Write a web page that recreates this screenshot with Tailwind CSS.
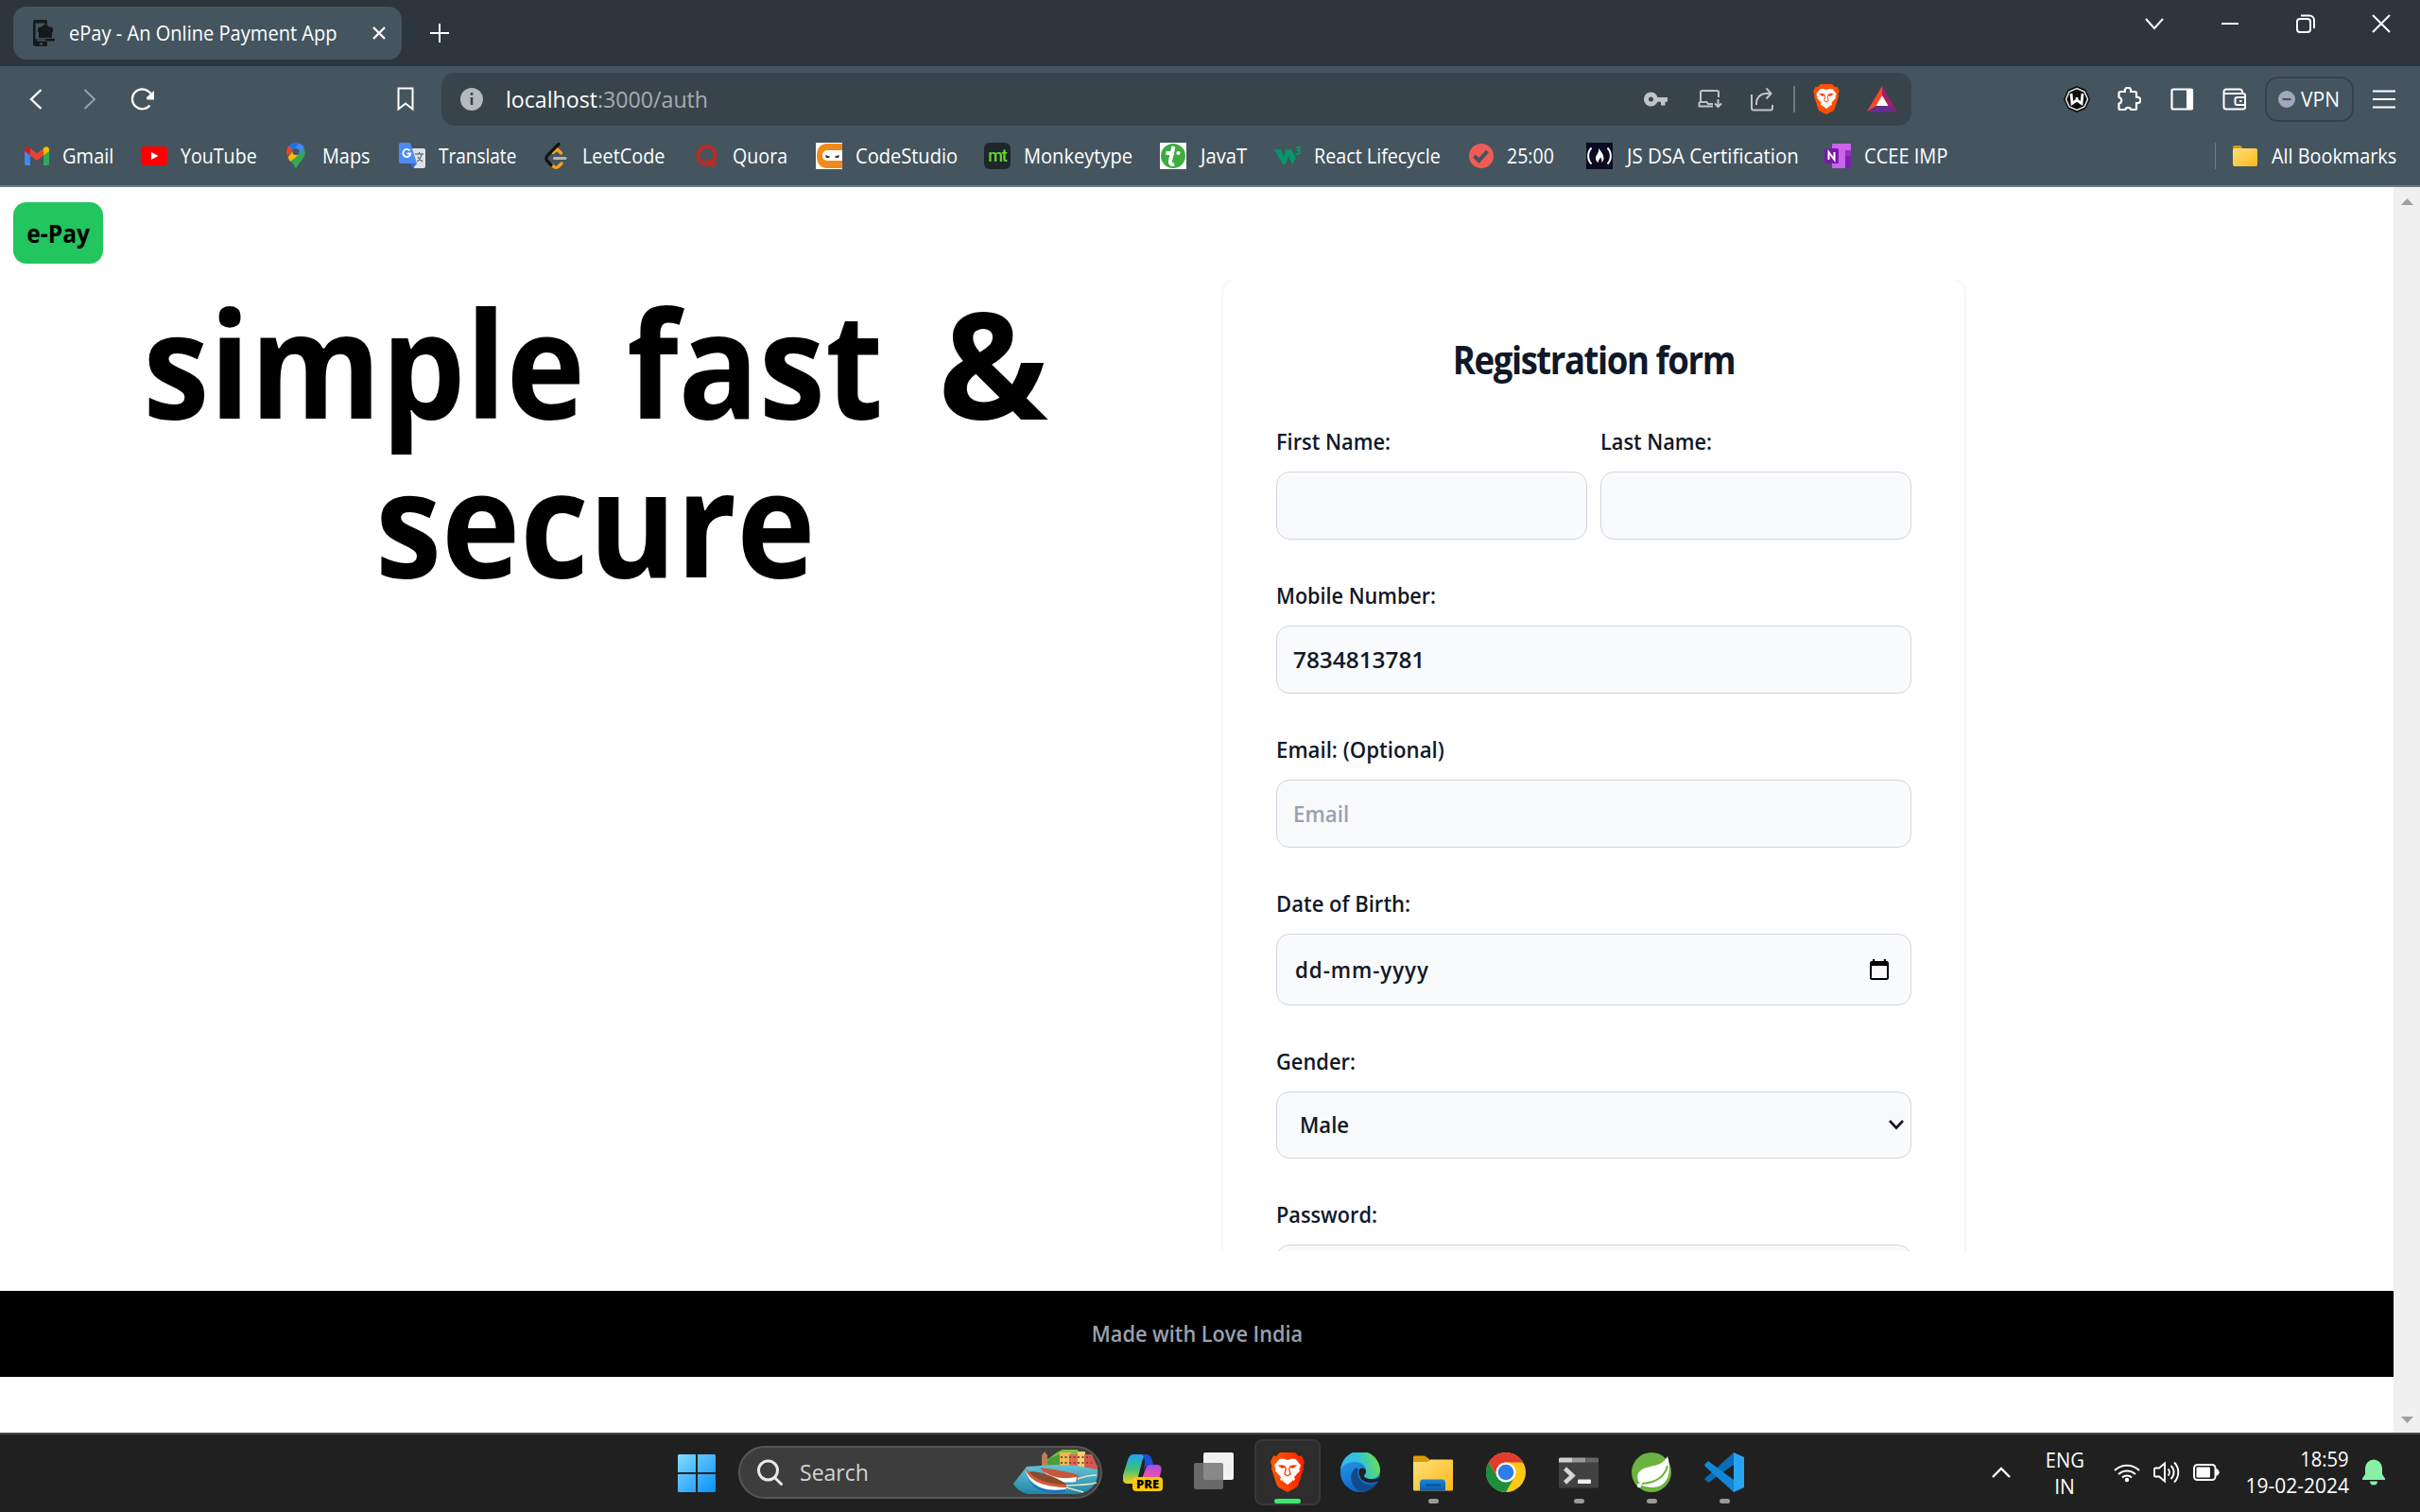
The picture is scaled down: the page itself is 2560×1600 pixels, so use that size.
<!DOCTYPE html>
<html lang="en">
<head>
<meta charset="utf-8">
<title>ePay - An Online Payment App</title>
<script src="https://cdn.jsdelivr.net/npm/@tailwindcss/browser@4"></script>
</head>
<body class="w-[2560px] h-[1600px] overflow-hidden bg-white font-['Open_Sans','Noto_Sans',sans-serif] text-[21px] leading-none text-white whitespace-nowrap">
<svg width="0" height="0" class="absolute">
  <defs>
    <linearGradient id="lg-brave" x1="0" x2="1"><stop offset="0" stop-color="#ff5a00"/><stop offset="1" stop-color="#ff2000"/></linearGradient>
    <linearGradient id="lg-win" x1="0" y1="0" x2="1" y2="1"><stop offset="0" stop-color="#7fdcff"/><stop offset="1" stop-color="#0a8ffb"/></linearGradient>
    <linearGradient id="lg-folder" x1="0" y1="0" x2="1" y2="1"><stop offset="0" stop-color="#ffe07a"/><stop offset="1" stop-color="#fbb91b"/></linearGradient>
    <linearGradient id="lg-tray" x1="0" y1="0" x2="0" y2="1"><stop offset="0" stop-color="#1a86d8"/><stop offset="1" stop-color="#0b5fae"/></linearGradient>
    <linearGradient id="lg-edge1" x1="0" y1=".6" x2="1" y2=".4"><stop offset="0" stop-color="#35b8f5"/><stop offset=".5" stop-color="#2fc3d8"/><stop offset="1" stop-color="#6be04a"/></linearGradient>
    <linearGradient id="lg-edge2" x1="0" y1="0" x2=".4" y2="1"><stop offset="0" stop-color="#2da0ec"/><stop offset="1" stop-color="#0a66c8"/></linearGradient>
    <linearGradient id="lg-cop1" x1="0" y1="0" x2="0" y2="1"><stop offset="0" stop-color="#19a5f5"/><stop offset=".5" stop-color="#3fbf7a"/><stop offset="1" stop-color="#f8d21c"/></linearGradient>
    <linearGradient id="lg-cop2" x1="0" y1="0" x2="0" y2="1"><stop offset="0" stop-color="#a54bf0"/><stop offset=".6" stop-color="#f0559a"/><stop offset="1" stop-color="#ff8a5c"/></linearGradient>
    <linearGradient id="lg-sea" x1="0" y1="0" x2="0" y2="1"><stop offset="0" stop-color="#66c3d6"/><stop offset="1" stop-color="#1f86a8"/></linearGradient>
    <symbol id="lion" viewBox="0 0 36 42">
      <path d="M10 0h16l4 4 3-.5L36 10l-1.500 4L35 17l-5.500 17-2 3L18 42l-9.500-5-2-3L1 17l.5-3L0 10l3-6.500L6 4z"/>
      <path fill="#fff" d="M9.500 7l4-.5L18 8l4.500-1.500 4 .5 5.500 6.500-1.500 4 .5 2-6 6.500 1 2.500-1.500 1.500-6.500-4-6.500 4-1.500-1.500 1-2.500L5 19.500l.5-2-1.500-4z"/>
      <path fill="#f83a05" d="M7.500 13.500l5-.3 3.500 1.300-.5 1.500-3.500.7zM28.500 13.500l-5-.3-3.500 1.300.5 1.500 3.500.7z"/>
      <path fill="none" stroke="#f83a05" stroke-width="1.300" d="M15.500 15.500l.8 2-1.300 5.500 3 1.800 3-1.800-1.300-5.500.8-2"/>
      <path fill="#fff" d="M13 29l5-3.300 5 3.300v1.200l-5 4-5-4z"/>
    </symbol>
  </defs>
</svg>

<!-- Tab strip -->
<header class="flex h-[70px] w-full items-start bg-[#2c363c]">
  <div class="ml-[14px] mt-[7px] flex h-[56px] w-[411px] items-center rounded-[14px] bg-[#44555f] pl-[20px]">
    <svg class="h-[28px] w-[24px]" viewBox="0 0 24 28"><path fill="#15191c" fill-rule="evenodd" d="M2 0h13l1 1v4h-2.500V3.500h-10v17H14V23H2.500zM6 13V9l2-1.500h2L14 4l4 3.500h2L22 9v4zM7 13h14v6H7zM5 20h19v2.500H5zM2 23h14v4l-1 1H3l-1-1zM8 24.500v2h3v-2z"/><path stroke="#15191c" stroke-width="2" d="M2 1v26"/></svg>
    <span class="ml-[15px] w-[291px] origin-left scale-x-[.956]">ePay - An Online Payment App</span>
    <svg class="ml-[29px] h-[16px] w-[16px]" viewBox="0 0 16 16" fill="none" stroke="#fff" stroke-width="2.400"><path d="M2 2l12 12M14 2L2 14"/></svg>
  </div>
  <svg class="ml-[30px] mt-[25px] h-[20px] w-[20px]" viewBox="0 0 20 20" fill="none" stroke="#fff" stroke-width="2"><path d="M10 0v20M0 10h20"/></svg>
  <div class="ml-auto mr-[31px] mt-[15px] flex items-center gap-[60px]">
    <svg class="h-[20px] w-[20px]" viewBox="0 0 20 20" fill="none" stroke="#fff" stroke-width="2"><path d="M1 5l9 10 9-10"/></svg>
    <svg class="h-[20px] w-[20px]" viewBox="0 0 20 20" fill="none" stroke="#fff" stroke-width="2"><path d="M1 10h18"/></svg>
    <svg class="h-[20px] w-[20px]" viewBox="0 0 20 20" fill="none" stroke="#fff" stroke-width="2"><rect x="1" y="5" width="14" height="14" rx="3"/><path d="M5 1.500h9a5 5 0 0 1 5 5V15"/></svg>
    <svg class="h-[20px] w-[20px]" viewBox="0 0 20 20" fill="none" stroke="#fff" stroke-width="2"><path d="M1 1l18 18M19 1L1 19"/></svg>
  </div>
</header>

<!-- Toolbar -->
<div class="flex h-[70px] w-full items-center bg-[#44555f]">
  <svg class="ml-[31px] h-[24px] w-[14px]" viewBox="0 0 14 24" fill="none" stroke="#fff" stroke-width="2.400"><path d="M12.500 2L2 12l10.500 10"/></svg>
  <svg class="ml-[43px] h-[24px] w-[14px]" viewBox="0 0 14 24" fill="none" stroke="#97a1a8" stroke-width="2"><path d="M1.500 2L12 12 1.500 22"/></svg>
  <svg class="ml-[36px] h-[26px] w-[26px]" viewBox="0 0 26 26" fill="none" stroke="#fff" stroke-width="2.200"><path d="M20.500 19.500A10.500 10.500 0 1 1 20 5.500L22.500 8"/><path fill="#fff" stroke="none" d="M25 4v9.500h-7a3 3 0 0 1-1-2.500z"/></svg>
  <svg class="ml-[256px] h-[26px] w-[18px]" viewBox="0 0 18 26" fill="none" stroke="#fff" stroke-width="2"><path d="M1.500 1.500h15v22L9 17.500l-7.500 6z"/></svg>
  <div class="ml-[29px] flex h-[56px] w-[1555px] items-center rounded-[14px] bg-[#38444b] pl-[20px] text-[24.5px]">
    <svg class="h-[24px] w-[24px]" viewBox="0 0 24 24"><circle cx="12" cy="12" r="12" fill="#b5babd"/><path fill="#38444b" d="M10.700 5h2.600v2.700h-2.600zM10.700 10h2.600v8h-2.600z"/></svg>
    <div class="ml-[24px] flex origin-left scale-x-[.945]"><span>localhost</span><span class="text-[#a6adb2]">:3000/auth</span></div>
    <div class="ml-auto mr-[15px] flex items-center">
      <svg class="h-[16px] w-[26px]" viewBox="0 0 26 16"><path fill="#c0c4c7" fill-rule="evenodd" d="M7.500 0.500a7.500 7.500 0 1 0 6.900 10.300H18V14.500h4.500v-3.700H25V6H14.400A7.500 7.500 0 0 0 7.500 .5zm0 5a2.500 2.500 0 1 1 0 5 2.500 2.500 0 0 1 0-5z"/></svg>
      <svg class="ml-[31px] h-[20px] w-[26px]" viewBox="0 0 26 20" fill="none" stroke="#c0c4c7" stroke-width="2"><path d="M22 8V2.500A1.500 1.500 0 0 0 20.500 1H4.500A1.500 1.500 0 0 0 3 2.500V13M1.500 13h8l1.500 2h5M1.500 13v4.500H16M21.500 10v8M18 14.500l3.500 3.500 3.500-3.500"/></svg>
      <svg class="ml-[30px] h-[26px] w-[26px]" viewBox="0 0 26 26" fill="none" stroke="#c0c4c7" stroke-width="2"><path d="M1 8v14.500a2 2 0 0 0 2 2h18a2 2 0 0 0 2-2V19M6 19v-2A10 10 0 0 1 15 7h7M16.500 1.500l5 5.500-5 5.500"/></svg>
      <div class="ml-[19px] h-[28px] w-[2px] bg-[#6d7a82]"></div>
      <svg class="ml-[19px] h-[32px] w-[28px]" fill="#ff5000"><use href="#lion" width="28" height="32"/></svg>
      <svg class="ml-[29px] h-[28px] w-[32px]" viewBox="0 0 32 28"><path fill="#ff4724" d="M16 0L0 27l10-6 6-11z"/><path fill="#9e1f63" d="M16 0l16 27-10-6-6-11z"/><path fill="#662d91" d="M0 27.500h32L22 21H10z"/><path fill="#fff" d="M16 10l6.500 11h-13z"/></svg>
    </div>
  </div>
  <div class="ml-auto mr-[26px] flex items-center">
    <svg class="h-[28px] w-[28px]" viewBox="0 0 28 28"><path fill="#0a0a0a" d="M14 0l9.500 4L28 14l-4.500 10L14 28l-9.500-4L0 14 4.500 4z"/><path fill="#0a0a0a" stroke="#dfe3e5" stroke-width="1.600" d="M14 2.500l8 3.500 3.500 8-3.500 8-8 3.500L6 22l-3.500-8L6 6z"/><path fill="none" stroke="#fff" stroke-width="2.800" d="M8 8l1 10.500 5-3.500 5 3.500L20 8M14 12v4"/></svg>
    <svg class="ml-[28px] h-[26px] w-[26px]" viewBox="0 0 26 26" fill="none" stroke="#fff" stroke-width="2.200" stroke-linejoin="round"><path d="M4 5h5a3.200 3.200 0 1 1 6 0h4.500a1.500 1.500 0 0 1 1.500 1.500V11a3.200 3.200 0 1 1 0 6v5.500a1.500 1.500 0 0 1-1.500 1.500H15.500a3.500 3.500 0 0 0-6.500 0H4a1.500 1.500 0 0 1-1.500-1.500V17.500a3.300 3.300 0 0 0 0-6.500V6.500A1.500 1.500 0 0 1 4 5z"/></svg>
    <svg class="ml-[31px] h-[24px] w-[26px]" viewBox="0 0 26 24"><rect x="1.500" y="1.500" width="21.500" height="21" rx="1.500" fill="none" stroke="#fff" stroke-width="2.200"/><path fill="#fff" d="M17 1h7v22h-7z"/></svg>
    <svg class="ml-[29px] h-[24px] w-[26px]" viewBox="0 0 26 24" fill="none" stroke="#fff" stroke-width="2"><path d="M21 6V4a2.500 2.500 0 0 0-2.500-2.500H4A2.500 2.500 0 0 0 1.500 4v16A2.500 2.500 0 0 0 4 22.500h18a2 2 0 0 0 2-2V8a2 2 0 0 0-2-2H2M24 10h-8.500a2 2 0 0 0-2 2v4a2 2 0 0 0 2 2H24M18 14h2.500"/></svg>
    <div class="ml-[19px] flex h-[48px] w-[94px] items-center rounded-[14px] border-2 border-[#36424a] pl-[12px]">
      <svg class="h-[18px] w-[18px]" viewBox="0 0 18 18"><circle cx="9" cy="9" r="9" fill="#a1a7bd"/><path d="M4.500 9h9" stroke="#44555f" stroke-width="2.200"/></svg>
      <span class="ml-[6px]">VPN</span>
    </div>
    <svg class="ml-[20px] h-[20px] w-[24px]" viewBox="0 0 24 20" stroke="#fff" stroke-width="2"><path d="M0 1.500h24M0 10h24M0 18.500h24"/></svg>
  </div>
</div>

<!-- Bookmarks bar -->
<nav class="flex h-[58px] w-full items-start border-b-2 border-[#6f7c85] bg-[#44555f] pl-[25px] pt-[10px] [&_svg]:shrink-0">
  <a class="flex h-[30px] w-[124px] items-center gap-[13px]"><svg class="h-[28px] w-[28px]" viewBox="0 0 28 28"><path fill="#4285f4" d="M1 8v14a2 2 0 0 0 2 2h4V12z"/><path fill="#34a853" d="M27 8v14a2 2 0 0 1-2 2h-4V12z"/><path fill="#ea4335" d="M7 6l7 5.500L21 6v7.500L14 19l-7-5.500z"/><path fill="#c5221f" d="M1 7a3 3 0 0 1 5-2l1 1v7.500L1 9z"/><path fill="#fbbc04" d="M27 7a3 3 0 0 0-5-2l-1 1v7.500L27 9z"/></svg><span class="origin-left scale-x-[.955]">Gmail</span></a>
  <a class="flex h-[30px] w-[150px] items-center gap-[14px]"><svg class="h-[28px] w-[28px]" viewBox="0 0 28 28"><rect y="4" width="28" height="20" rx="4" fill="#f00"/><path fill="#fff" d="M11 10l7.500 4-7.500 4z"/></svg><span class="origin-left scale-x-[.934]">YouTube</span></a>
  <a class="flex h-[30px] w-[123px] items-center gap-[14px]"><svg class="h-[28px] w-[28px]" viewBox="0 0 28 28"><path fill="#34a853" d="M14 28c1.500-6 10-11 10-18L20 4 8 19c3 3 5 6 6 9z"/><path fill="#fbbc04" d="M8 19l9-11-3 0-8 8z"/><path fill="#fbbc04" d="M5.500 15.500L12 7l5 6-9 7z"/><path fill="#ea4335" d="M6.500 3.500A10 10 0 0 0 5 14l7-7z"/><path fill="#1a73e8" d="M6.500 3.500A9.800 9.800 0 0 1 17 .5L11 8z"/><path fill="#4285f4" d="M17 .5a10 10 0 0 1 6 5.500l-7 8-5-6z"/><circle cx="14" cy="9.500" r="3.600" fill="#44555f"/></svg><span class="origin-left scale-x-[.945]">Maps</span></a>
  <a class="flex h-[30px] w-[153px] items-center gap-[14px]"><svg class="h-[28px] w-[28px]" viewBox="0 0 28 28"><path fill="#dfe1e3" d="M12 6h14a2 2 0 0 1 2 2v17a2 2 0 0 1-2 2H16z"/><path fill="#3a68d0" d="M12 22h7l-4 5z"/><path fill="#4b8bf5" d="M2 0h10l7 22H2a2 2 0 0 1-2-2V2a2 2 0 0 1 2-2z"/><path fill="none" stroke="#fff" stroke-width="1.800" d="M11.500 8.500a4 4 0 1 0 .8 3H8.500"/><path fill="none" stroke="#6a7580" stroke-width="1.400" d="M17 12h9M21.500 10v2m2.500 0c-.5 4-3 6.500-5 8m1-5c1 2 3 4 5 5"/></svg><span class="origin-left scale-x-[.905]">Translate</span></a>
  <a class="flex h-[30px] w-[159px] items-center gap-[13px]"><svg class="h-[28px] w-[28px]" viewBox="0 0 28 28" fill="none" stroke-width="3.200" stroke-linecap="round"><path stroke="#ffa116" d="M10 10.500L14.500 7l4 4M8 23l3 2.500a4 4 0 0 0 4.500 0L19 22"/><path stroke="#111" d="M16 1.500L4 13.500a4.500 4.500 0 0 0 0 6L8 23.500"/><path stroke="#b3b3b3" d="M11.500 16.500H23"/></svg><span class="origin-left scale-x-[.945]">LeetCode</span></a>
  <a class="flex h-[30px] w-[129px] items-center gap-[13px]"><svg class="h-[28px] w-[28px]" viewBox="0 0 28 28"><ellipse cx="13.500" cy="13.500" rx="9" ry="9.500" fill="none" stroke="#b92b27" stroke-width="4"/><path fill="none" stroke="#b92b27" stroke-width="3.200" d="M12 18c4-1 5 6 8 6 2 0 3-1 3-3"/></svg><span class="origin-left scale-x-[.935]">Quora</span></a>
  <a class="flex h-[30px] w-[178px] items-center gap-[14px]"><svg class="h-[28px] w-[28px]" viewBox="0 0 28 28"><path fill="#fff" d="M0 0h28v28H0z"/><path fill="#f08a1c" d="M28 1v26H12C5 27 1 22 1 14S5 1 12 1z"/><path fill="#fff" d="M28 8v11H13c-4 0-6-2-6-5.500S9 8 13 8z"/><path fill="#333" d="M10 13l5 1.500-1 1.500h-3zM25 13l-5 1.500 1 1.500h3z"/></svg><span class="origin-left scale-x-[.955]">CodeStudio</span></a>
  <a class="flex h-[30px] w-[186px] items-center gap-[14px]"><span class="flex h-[28px] w-[28px] shrink-0 items-center justify-center rounded-[6px] bg-[#1c262b] font-['Roboto',sans-serif] text-[18px] font-medium tracking-[-1px] text-[#65d62f]">mt</span><span class="origin-left scale-x-[.955]">Monkeytype</span></a>
  <a class="flex h-[30px] w-[121px] items-center gap-[15px]"><svg class="h-[28px] w-[28px]" viewBox="0 0 28 28"><path fill="#fff" d="M0 0h28v28H0z"/><circle cx="14" cy="14" r="13" fill="#3fab42"/><path fill="none" stroke="#fff" stroke-width="4" d="M14.500 4L11 19c-.5 3 1 5 4 3.500M6.500 11H15"/><circle cx="19.500" cy="11" r="2" fill="#fff"/></svg><span class="origin-left scale-x-[.965]">JavaT</span></a>
  <a class="flex h-[30px] w-[205px] items-center gap-[14px]"><svg class="h-[28px] w-[28px]" viewBox="0 0 28 28"><path fill="#059669" d="M0 7h7l3 8 2-8h6l2 4 3 5-4 7-4-9-3 9-3 0z"/><path fill="none" stroke="#059669" stroke-width="1.800" d="M23 5h4l-2 3c3 0 3 4 0 4-1 0-2-.5-2-1"/></svg><span class="origin-left scale-x-[.94]">React Lifecycle</span></a>
  <a class="flex h-[30px] w-[125px] items-center gap-[13px]"><svg class="h-[28px] w-[28px]" viewBox="0 0 28 28"><circle cx="14" cy="14" r="13" fill="#f05b56"/><path fill="none" stroke="#44555f" stroke-width="4" d="M6.500 14l5 5L20.500 9"/></svg><span class="origin-left scale-x-[.93]">25:00</span></a>
  <a class="flex h-[30px] w-[252px] items-center gap-[15px]"><svg class="h-[28px] w-[28px]" viewBox="0 0 28 28"><path fill="#0a0a23" d="M0 0h28v28H0z"/><path fill="none" stroke="#fff" stroke-width="2" d="M5.500 5.500C1 10 1 18 5.500 22.500M22.500 5.500C27 10 27 18 22.500 22.500"/><path fill="#fff" d="M13 6c3 3 5.500 7 5.500 10.500A5 5 0 0 1 16 21c1-3 0-4-1-5.500-.5 2-2.500 2.500-2 5.500a5 5 0 0 1-3-4.500C10 13 14 11 13 6z"/></svg><span class="origin-left scale-x-[.973]">JS DSA Certification</span></a>
  <a class="flex h-[30px] w-[200px] items-center gap-[14px]"><svg class="h-[28px] w-[28px]" viewBox="0 0 28 28"><path fill="#ca64ea" d="M8 2a1 1 0 0 1 1-1h18a1 1 0 0 1 1 1v24a1 1 0 0 1-1 1H9a1 1 0 0 1-1-1z"/><path fill="#9332bf" d="M22 8h6v6h-6z"/><path fill="#7b1fa8" d="M22 14h6v12a1 1 0 0 1-1 1h-5z"/><rect y="6" width="15" height="16" rx="1.500" fill="#7719aa"/><path fill="none" stroke="#fff" stroke-width="2" d="M4.500 18v-8l6 8v-8"/></svg><span class="origin-left scale-x-[.955]">CCEE IMP</span></a>
  <div class="ml-auto mr-[24px] flex h-[30px] items-center">
    <div class="h-[28px] w-px bg-[#6f7c85]"></div>
    <svg class="ml-[17px] h-[28px] w-[28px]" viewBox="0 0 28 28"><path fill="#d99a0b" d="M1 5a2 2 0 0 1 2-2h6l2.500 3H25v6H1z"/><rect x="1" y="6" width="26" height="19" rx="2" fill="url(#lg-folder)"/></svg>
    <span class="ml-[14px] w-[133px] origin-left scale-x-[.945]">All Bookmarks</span>
  </div>
</nav>

<!-- Page viewport -->
<div class="flex h-[1318px] w-full bg-white font-semibold text-gray-900">
  <div class="flex w-[2532px] flex-col">
    <div class="flex h-[98px] items-start pl-[14px] pt-[16px]">
      <div class="flex h-[65px] w-[95px] items-center justify-center rounded-[14px] bg-[#22c55e] text-[27px] font-bold text-black"><span class="scale-x-[.912]">e-Pay</span></div>
    </div>
    <main class="flex h-[1028px] overflow-hidden">
      <h1 class="flex w-[1266px] flex-col items-center pr-[6px] pt-[3px] text-[156px] leading-[168px] font-bold text-black"><span class="scale-x-[.905] [word-spacing:8px]">simple fast <span class="ml-[27px] inline-block origin-right scale-x-110">&amp;</span></span><span class="scale-x-[.903]">secure</span></h1>
      <form class="ml-[28px] flex h-[1300px] w-[784px] shrink-0 flex-col gap-[42px] rounded-[14px] bg-white p-[56px] text-[24px] shadow-[0_0_4px_rgba(0,0,0,0.1)]">
        <h2 class="h-[56px] scale-x-[.891] text-center text-[41px] leading-[56px] font-bold tracking-[-1.6px]">Registration form</h2>
        <div class="flex gap-[14px]">
          <label class="flex w-[329px] flex-col gap-[14px]"><span class="h-[35px] origin-left scale-x-[.908] leading-[33px]">First Name:</span><span class="h-[72px] rounded-[14px] border border-gray-300 bg-gray-50"></span></label>
          <label class="flex w-[329px] flex-col gap-[14px]"><span class="h-[35px] origin-left scale-x-[.905] leading-[33px]">Last Name:</span><span class="h-[72px] rounded-[14px] border border-gray-300 bg-gray-50"></span></label>
        </div>
        <label class="flex flex-col gap-[14px]"><span class="h-[35px] origin-left scale-x-[.9] leading-[33px]">Mobile Number:</span><span class="flex h-[72px] items-center rounded-[14px] border border-gray-300 bg-gray-50 pb-[1px] pl-[17px]"><span class="origin-left scale-x-[1.015]">7834813781</span></span></label>
        <label class="flex flex-col gap-[14px]"><span class="h-[35px] origin-left scale-x-[.925] leading-[33px]">Email: (Optional)</span><span class="flex h-[72px] items-center rounded-[14px] border border-gray-300 bg-gray-50 pb-[1px] pl-[17px] text-gray-400"><span class="origin-left scale-x-[.93]">Email</span></span></label>
        <label class="flex flex-col gap-[14px]"><span class="h-[35px] origin-left scale-x-[.918] leading-[33px]">Date of Birth:</span><span class="flex h-[76px] items-center justify-between rounded-[14px] border border-gray-300 bg-gray-50 pl-[19px] pr-[23px]"><span class="origin-left scale-x-[.93] tracking-[1px]">dd-mm-yyyy</span><svg class="mb-[1px] h-[22px] w-[20px]" viewBox="0 0 20 22"><path fill="#000" fill-rule="evenodd" d="M3 0h2.200v2h9.600V0H17v2h1.500L20 3.500v17L18.500 22h-17L0 20.500v-17L1.500 2H3zM2 7v13h16V7z"/></svg></span></label>
        <label class="flex flex-col gap-[14px]"><span class="h-[35px] origin-left scale-x-[.91] leading-[33px]">Gender:</span><span class="flex h-[71px] items-center justify-between rounded-[14px] border border-gray-300 bg-gray-50 pb-[1px] pl-[24px] pr-[7px]"><span class="origin-left scale-x-[.92]">Male</span><svg class="h-[12px] w-[16px]" viewBox="0 0 16 12" fill="none" stroke="#111827" stroke-width="2.600"><path d="M1 2l7 7.500L15 2"/></svg></span></label>
        <label class="flex flex-col gap-[14px]"><span class="h-[35px] origin-left scale-x-[.905] leading-[33px]">Password:</span><span class="h-[72px] rounded-[14px] border border-gray-300 bg-gray-50"></span></label>
      </form>
    </main>
    <footer class="mt-[42px] flex h-[91px] items-center justify-center bg-black pb-[2px] text-[24px] text-gray-400"><span class="scale-x-[.904]">Made with Love India</span></footer>
  </div>
  <div class="flex w-[28px] flex-col items-center justify-between bg-[#f0f0f0] pb-[10px] pt-[12px]">
    <svg class="h-[7px] w-[13px]" viewBox="0 0 13 7"><path fill="#a0a0a0" d="M0 7h13L6.500 0z"/></svg>
    <svg class="h-[7px] w-[13px]" viewBox="0 0 13 7"><path fill="#a0a0a0" d="M0 0h13L6.500 7z"/></svg>
  </div>
</div>

<!-- Taskbar -->
<div class="flex h-[84px] w-full items-start border-t-2 border-[#454545] bg-[#202020] pl-[716px] pt-[5px]">
  <div class="flex h-[70px] items-center">
    <svg class="mt-[1px] h-[42px] w-[42px]" viewBox="0 0 42 42" fill="url(#lg-win)"><path d="M2 1h18v19H1V2zM22 1h18l1 1v18H22zM1 22h19v19H2l-1-1zM22 22h19v18l-1 1H22z"/></svg>
    <div class="ml-[23px] flex h-[56px] w-[385px] items-center rounded-full border-2 border-[#565656] bg-[#3d3d3d] pl-[18px]">
      <svg class="h-[28px] w-[28px]" viewBox="0 0 28 28" fill="none" stroke="#e8e8e8" stroke-width="3" stroke-linecap="round"><circle cx="11.500" cy="12" r="10"/><path d="M19 20l6.500 6.500"/></svg>
      <span class="ml-[17px] origin-left scale-x-[.94] text-[24.5px] text-[#d4d4d4]">Search</span>
      <svg class="ml-auto mr-[2px] h-[48px] w-[90px]" viewBox="0 0 90 48">
        <path fill="#7cc142" d="M34 12L46 3l6-3h16l6 22H40z"/><path fill="#4f9c3a" d="M36 12c3-5 9-4 12-8l4 14H36z"/>
        <path fill="#b98055" d="M30 6l3-4 3 4v12h-6z"/><path fill="#efb94c" d="M49 3h12v16H49z"/><path fill="#e2665a" d="M59 5h10v15H59z"/><path fill="#f3d06a" d="M68 2h8v19h-8z"/><path fill="#d9574e" d="M75 5h8l6 13v6H75z"/>
        <path fill="none" stroke="#7a4a46" stroke-width="2" stroke-dasharray="2 2.500" d="M50 8h32M50 14h36"/>
        <path fill="url(#lg-sea)" d="M14 18l30-2 22 1 23 4c2 14-8 26-24 26H17C9 47 1 39 0 36z"/>
        <path fill="#c9573c" d="M28 19c16 2 28 4 41 8l-3 6c-14 2-30-3-38-14z"/><path fill="#fff" d="M33 24c12 7 22 7 34 5l-1 5c-14 2-26-1-33-10z"/>
        <path fill="#fff" d="M13 21c6 11 22 15 43 18l-1 5c-20 2-40-7-42-23z"/><path fill="#1b72c4" d="M17 34c10 8 22 10 38 8v3c-16 3-32-2-38-11z"/><path fill="#8a4a2c" d="M15 24c8-3 32 5 41 13-16 3-37-4-41-13z"/><path fill="#d65a3a" d="M13 20l4 4c7 9 24 13 39 13v3C36 40 15 34 13 20z"/>
        <path fill="none" stroke="#efe3b8" stroke-width="1.500" d="M56 38c12-1 20 0 32-3M68 31c8-3 14-4 20-4M56 40l18 5"/>
      </svg>
    </div>
    <div class="relative ml-[22px] h-[42px] w-[42px]">
      <svg class="h-[42px] w-[42px]" viewBox="0 0 42 42"><path fill="url(#lg-cop1)" d="M11 2h16c-4 0-6 4-7 8l-4 16c-1 5-3 7-7 7H5c-5 0-6-4-5-9L5 8c1-4 3-6 6-6z"/><path fill="#1c50dc" d="M19 2h5c4 0 6 3 7 7l1 4h-4c-4 0-5 3-6 6l1-9c0-4-1-7-4-8z"/><path fill="url(#lg-cop2)" d="M28 13h8c5 0 5 4 4 8l-4 14H12l4-4c3 0 4-2 5-6l3-8c1-3 2-4 4-4z"/></svg>
      <span class="absolute bottom-[1px] left-[10px] flex h-[15px] w-[32px] items-center justify-center rounded-[4px] bg-[#ffc60a] text-[13px] font-extrabold text-black">PRE</span>
    </div>
    <svg class="ml-[33px] mb-[2px] h-[42px] w-[42px]" viewBox="0 0 42 42"><rect x="10" y="1" width="32" height="29" rx="2" fill="#f1f1f1"/><rect y="12" width="31" height="28" rx="2" fill="#757575" fill-opacity=".85"/></svg>
    <div class="relative ml-[22px] flex h-[70px] w-[70px] items-center justify-center rounded-[8px] border-2 border-[#383838] bg-[#2d2d2d]">
      <svg class="h-[42px] w-[36px]" fill="url(#lg-brave)"><use href="#lion" width="36" height="42"/></svg>
      <div class="absolute bottom-[0px] left-[19px] h-[5px] w-[28px] rounded-full bg-[#3ee86b]"></div>
    </div>
    <svg class="ml-[21px] h-[42px] w-[42px]" viewBox="0 0 42 42"><circle cx="21" cy="21" r="21" fill="url(#lg-edge2)"/><path fill="url(#lg-edge1)" d="M0 20A21 21 0 0 1 42 19c0 6-5 9-10 9-4 0-7-1.500-7-3s2-2 2-6c0-5-5-9-12-9C7 10 1 14 0 20z"/><path fill="#114a8b" d="M17 16c-9 5-7 19 3 25 8 1 15-2 19-9-4 3-9 3-13 1-6-3-9-9-7-15z"/><path fill="#202020" d="M20 18c-2 7 3 14 12 14 4 0 6-1 8-2l1.500-4C39 28 36 28.500 32 28c-4 0-7-1.500-7-3s2-2 2-5-4-5-7-2z"/></svg>
    <div class="relative ml-[35px] h-[42px] w-[42px]"><svg class="h-[42px] w-[42px]" viewBox="0 0 42 42"><path fill="#dd9b09" d="M0 5a1.500 1.500 0 0 1 1.500-1.500H12L17 7v5H0z"/><path fill="url(#lg-folder)" d="M0 10h15l3-2.500h23a1 1 0 0 1 1 1V39a1.500 1.500 0 0 1-1.500 1.500h-39A1.500 1.500 0 0 1 0 39z"/><path fill="url(#lg-tray)" d="M7 40.500V32a3.500 3.500 0 0 1 3.500-3.500h20A3.500 3.500 0 0 1 34 32v8.500z"/><path stroke="#0a4f94" stroke-width="2" d="M13 34.500h16"/></svg><div class="absolute -bottom-[12px] left-[16px] h-[5px] w-[11px] rounded-full bg-[#9a9a9a]"></div></div>
    <svg class="ml-[35px] h-[42px] w-[42px]" viewBox="0 0 42 42"><circle cx="21" cy="21" r="21" fill="#ffc815"/><path fill="#e33b2e" d="M21 0a21 21 0 0 1 18.200 10.500H21a10.500 10.500 0 0 0-9 15.500L2.800 10.500A21 21 0 0 1 21 0z"/><path fill="#1e8e3e" d="M2.800 10.500L12 26.250a10.500 10.500 0 0 0 18 0L21 42A21 21 0 0 1 2.800 10.500z"/><circle cx="21" cy="21" r="10.500" fill="#fff"/><circle cx="21" cy="21" r="8.300" fill="#2b7de9"/></svg>
    <div class="relative ml-[35px] h-[42px] w-[42px]"><svg class="h-[42px] w-[42px]" viewBox="0 0 42 42"><path fill="#414141" d="M0 6h42v30a1.500 1.500 0 0 1-1.500 1.500h-39A1.500 1.500 0 0 1 0 36z"/><path fill="#cfcfcf" d="M0 10.500V7a1.500 1.500 0 0 1 1.500-1.500H14v5z"/><path fill="#999" d="M14 5.500h14v5H14z"/><path fill="#666" d="M28 5.500h12.500A1.500 1.500 0 0 1 42 7v3.500H28z"/><path fill="none" stroke="#d6d6d6" stroke-width="4.500" d="M6.500 17l8 7.500-8 7.500"/><rect x="20" y="28.500" width="14" height="4.500" rx="1" fill="#eee"/></svg><div class="absolute -bottom-[12px] left-[16px] h-[5px] w-[11px] rounded-full bg-[#9a9a9a]"></div></div>
    <div class="relative ml-[35px] h-[42px] w-[42px]"><svg class="h-[42px] w-[42px]" viewBox="0 0 42 42"><circle cx="21" cy="21" r="21" fill="#6db33f"/><path fill="#fff" d="M38 4c4 12 2 26-7 31-6 3-14 2-20 0C5 30 4 22 11 18c8-5 21-2 27-14z"/><path fill="none" stroke="#6db33f" stroke-width="2" d="M38 14c-3 12-13 18-27 19"/><circle cx="8" cy="35" r="2.200" fill="#fff"/></svg><div class="absolute -bottom-[12px] left-[16px] h-[5px] w-[11px] rounded-full bg-[#9a9a9a]"></div></div>
    <div class="relative ml-[35px] h-[42px] w-[42px]"><svg class="h-[42px] w-[42px]" viewBox="0 0 42 42"><path fill="#0b6cb5" d="M0 28l4 4L31 13V0z"/><path fill="#1287d6" d="M0 13l4-4 27 20v13L1 15z"/><path fill="#26a5f2" d="M31 0l11 5v32l-11 5z"/></svg><div class="absolute -bottom-[12px] left-[16px] h-[5px] w-[11px] rounded-full bg-[#9a9a9a]"></div></div>
  </div>
  <div class="ml-auto mr-[37px] flex h-[70px] items-center">
    <svg class="h-[12px] w-[20px]" viewBox="0 0 20 12" fill="none" stroke="#fff" stroke-width="2.400"><path d="M1 11l9-9 9 9"/></svg>
    <div class="ml-[37px] flex w-[40px] flex-col items-center pt-[1px] leading-[28px]"><span class="scale-x-[.96]">ENG</span><span>IN</span></div>
    <svg class="ml-[32px] h-[22px] w-[28px]" viewBox="0 0 28 22" fill="none" stroke="#fff" stroke-width="2"><path d="M1 9a18.500 18.500 0 0 1 26 0M5 13a13 13 0 0 1 18 0M9 16.500a7.500 7.500 0 0 1 10 0"/><circle cx="14" cy="19" r="2.200" fill="#fff" stroke="none"/></svg>
    <svg class="ml-[14px] h-[24px] w-[28px]" viewBox="0 0 28 24" fill="none" stroke="#fff" stroke-width="1.900"><path d="M1 8.500a1 1 0 0 1 1-1h4l6-5v19l-6-5H2a1 1 0 0 1-1-1zM15.500 8.500a5 5 0 0 1 0 7M18.500 5a9.500 9.500 0 0 1 0 14M22 1.500a15 15 0 0 1 0 21"/></svg>
    <svg class="ml-[14px] h-[18px] w-[28px]" viewBox="0 0 28 18"><rect x="1" y="1" width="22.500" height="16" rx="3.500" fill="none" stroke="#fff" stroke-width="2"/><rect x="3.500" y="3.500" width="14.500" height="11" rx="1" fill="#fff"/><path fill="#fff" d="M24 5.500h2L28 9l-2 3.500h-2z"/></svg>
    <div class="ml-[27px] flex w-[110px] flex-col items-end leading-[28px]"><span class="origin-right scale-x-[.96]">18:59</span><span>19-02-2024</span></div>
    <svg class="ml-[14px] h-[28px] w-[24px]" viewBox="0 0 24 28"><path fill="#87f0a5" d="M12 .5a9 9 0 0 1 9 9V16l3 4.500v1.500H0v-1.500L3 16V9.500a9 9 0 0 1 9-9zM8 23.500h8a4 4 0 0 1-8 0z"/></svg>
  </div>
</div>
</body>
</html>
